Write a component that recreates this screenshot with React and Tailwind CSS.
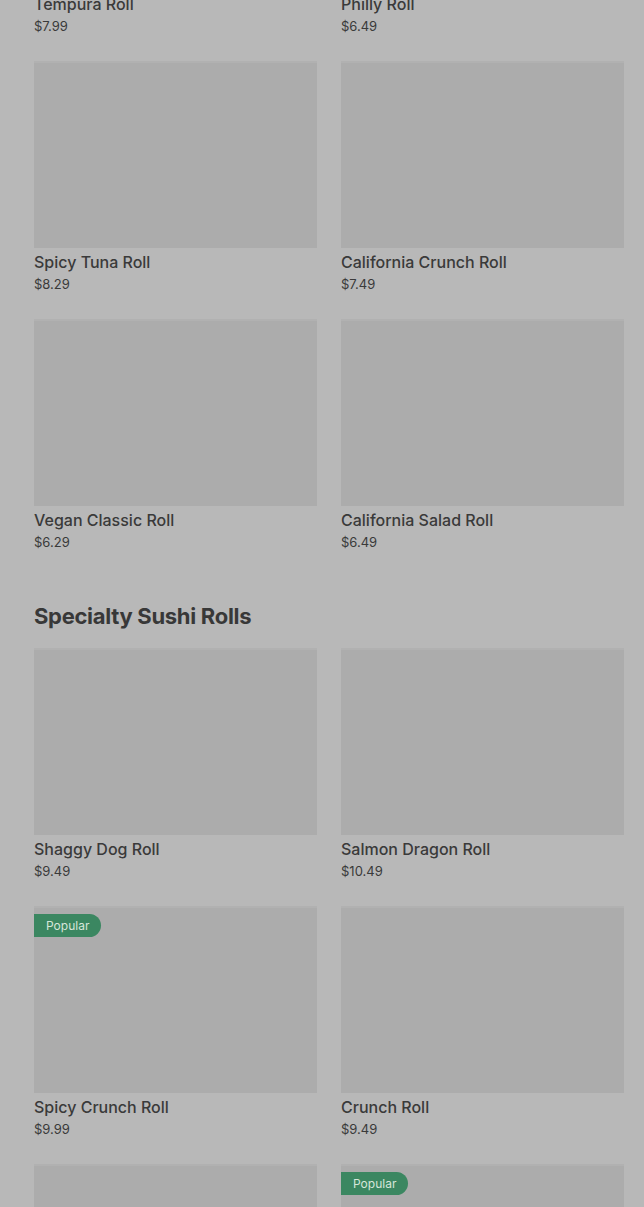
import React from 'react';

const sections = [
  {
    title: null,
    items: [
      { name: 'Tempura Roll', price: '$7.99' },
      { name: 'Philly Roll', price: '$6.49' },
      { name: 'Spicy Tuna Roll', price: '$8.29' },
      { name: 'California Crunch Roll', price: '$7.49' },
      { name: 'Vegan Classic Roll', price: '$6.29' },
      { name: 'California Salad Roll', price: '$6.49' },
    ],
  },
  {
    title: 'Specialty Sushi Rolls',
    items: [
      { name: 'Shaggy Dog Roll', price: '$9.49' },
      { name: 'Salmon Dragon Roll', price: '$10.49' },
      { name: 'Spicy Crunch Roll', price: '$9.99', popular: true },
      { name: 'Crunch Roll', price: '$9.49' },
      { name: 'Volcano Roll', price: '$10.99' },
      { name: 'Rainbow Roll', price: '$11.49', popular: true },
    ],
  },
];

const ItemCard = ({ item }) => (
  <div className="flex flex-col">
    <div className="relative h-[187px] bg-[#acacac] border-t-2 border-[#b1b1b1]">
      {item.popular && (
        <span className="absolute left-0 top-[6px] h-[23px] px-3 flex items-center rounded-r-full bg-[#3b8761] text-[12px] text-[#d6e6da]">
          Popular
        </span>
      )}
    </div>
    <p className="mt-[4px] text-[16px] leading-[20px] font-medium text-[#3a3a3a]">{item.name}</p>
    <p className="mt-[2px] text-[13px] leading-[20px] text-[#3a3a3a]">{item.price}</p>
  </div>
);

const App = () => {
  return (
    <div
      className="h-[1207px] overflow-hidden bg-[#b8b8b8]"
      style={{ fontFamily: 'Inter, "Liberation Sans", sans-serif' }}
    >
      <div className="-mt-[197px] pl-[34px] pr-[20px]">
        {sections.map((section, i) => (
          <section key={i} className={i > 0 ? 'mt-[50px]' : ''}>
            {section.title && (
              <h2 className="mb-[18px] text-[22px] leading-[28px] font-bold tracking-[-0.3px] text-[#383838]">
                {section.title}
              </h2>
            )}
            <div className="grid grid-cols-2 gap-x-6 gap-y-[25px]">
              {section.items.map((item) => (
                <ItemCard key={item.name} item={item} />
              ))}
            </div>
          </section>
        ))}
      </div>
    </div>
  );
};

export default App;
